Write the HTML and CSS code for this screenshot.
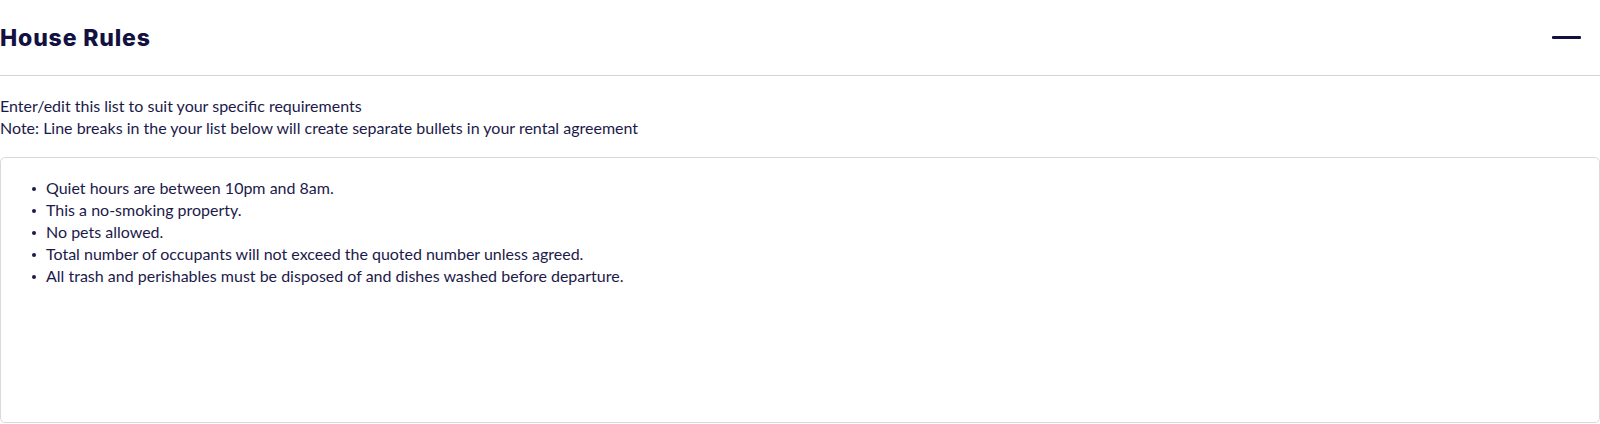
FILE: index.html
```html
<!DOCTYPE html>
<html lang="en">
<head>
<meta charset="utf-8">
<title>House Rules</title>
<link rel="stylesheet" href="styles.css">
</head>
<body>
<section class="panel">
  <header class="panel-header">
    <h2 class="panel-title">House Rules</h2>
    <button class="collapse-btn" aria-label="Collapse"><span class="minus"></span></button>
  </header>
  <div class="panel-body">
    <p class="hint">Enter/edit this list to suit your specific requirements<br>Note: Line breaks in the your list below will create separate bullets in your rental agreement</p>
    <div class="editor">
      <ul class="rules">
        <li>Quiet hours are between 10pm and 8am.</li>
        <li>This a no-smoking property.</li>
        <li>No pets allowed.</li>
        <li>Total number of occupants will not exceed the quoted number unless agreed.</li>
        <li>All trash and perishables must be disposed of and dishes washed before departure.</li>
      </ul>
    </div>
  </div>
</section>
</body>
</html>
```

FILE: styles.css
```css
* { box-sizing: border-box; }
html, body { margin: 0; padding: 0; background: #fff; }
body { color: #1c1a4a; font-family: "Lato", "Liberation Sans", sans-serif; }
.panel { width: 1600px; }
.panel-header {
  height: 76px;
  display: flex;
  align-items: center;
  justify-content: space-between;
  padding: 0 19px 0 0;
  border-bottom: 1px solid #d4d3db;
}
.panel-title {
  margin: 0;
  font-family: "Inter", "Liberation Sans", sans-serif;
  font-weight: 800;
  font-size: 23px;
  letter-spacing: 0.85px;
  color: #12113f;
}
.collapse-btn {
  border: 0; background: none; padding: 0; margin: 0;
  width: 29px; height: 20px;
  display: flex; align-items: center;
}
.minus { display: block; width: 29px; height: 3px; background: #12113f; border-radius: 1px; }
.panel-body { padding-top: 19px; }
.hint { margin: 0 0 18px; font-size: 16px; line-height: 22px; }
.editor {
  height: 266px;
  border: 1px solid #d8d8e0;
  border-radius: 5px;
  padding: 19px 20px;
}
.rules { margin: 0; padding: 0; list-style: none; font-size: 16px; line-height: 22px; }
.rules li { display: flex; }
.rules li::before {
  content: "";
  flex: none;
  width: 4px;
  height: 4px;
  border-radius: 50%;
  background: currentColor;
  margin: 10px 10px 0 11px;
}
```
